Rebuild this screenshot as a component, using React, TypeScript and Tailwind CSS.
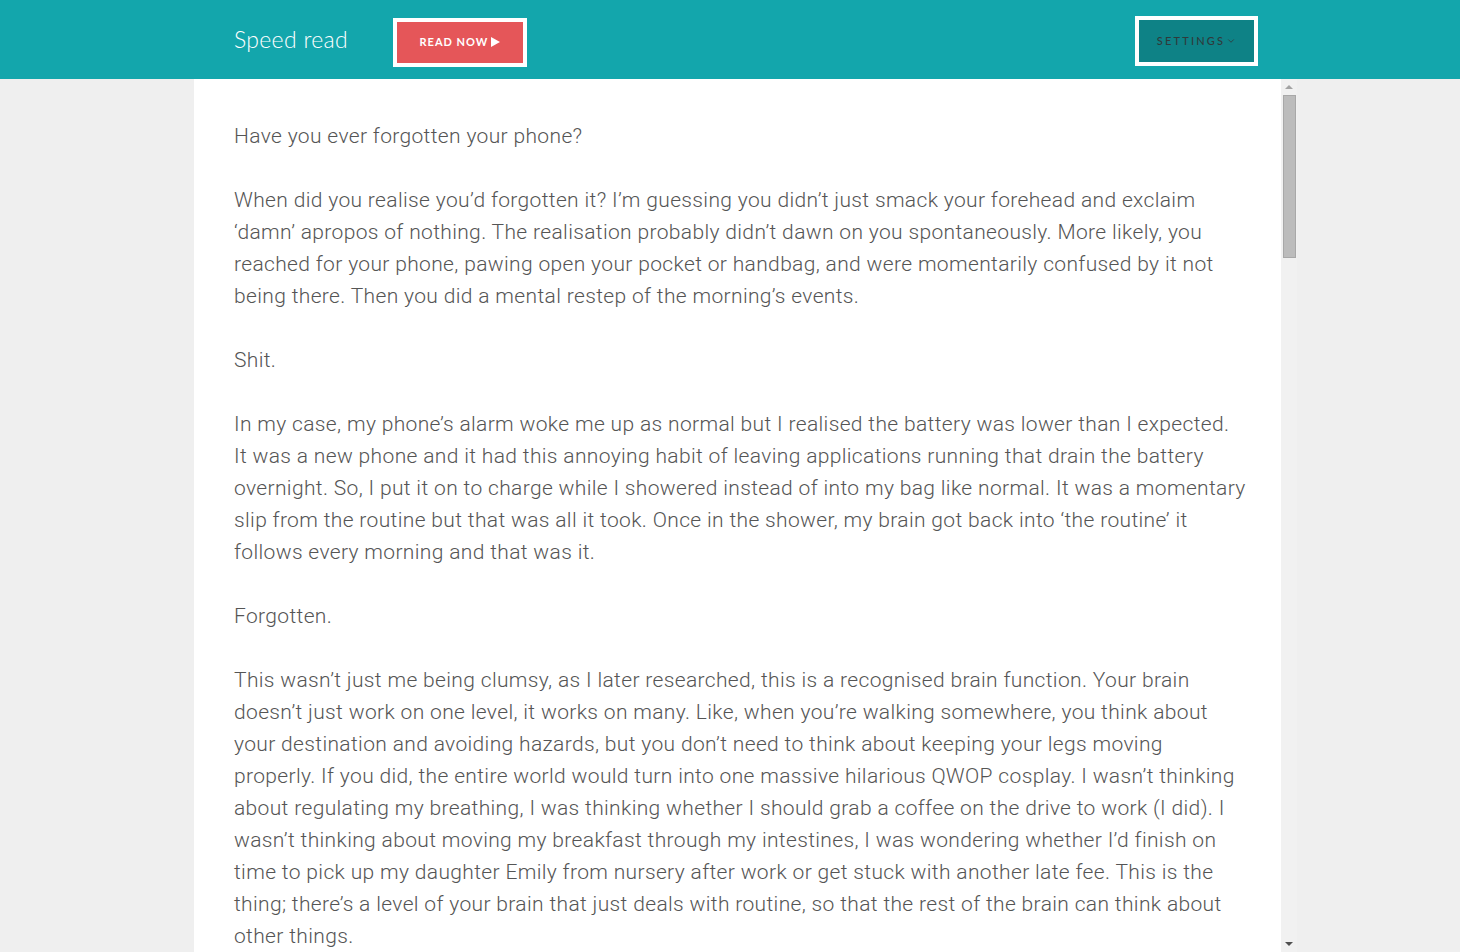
import { ChevronDown } from "lucide-react";

const paragraphs: string[][] = [
  ["Have you ever forgotten your phone?"],
  [
    "When did you realise you\u2019d forgotten it? I\u2019m guessing you didn\u2019t just smack your forehead and exclaim",
    "\u2018damn\u2019 apropos of nothing. The realisation probably didn\u2019t dawn on you spontaneously. More likely, you",
    "reached for your phone, pawing open your pocket or handbag, and were momentarily confused by it not",
    "being there. Then you did a mental restep of the morning\u2019s events.",
  ],
  ["Shit."],
  [
    "In my case, my phone\u2019s alarm woke me up as normal but I realised the battery was lower than I expected.",
    "It was a new phone and it had this annoying habit of leaving applications running that drain the battery",
    "overnight. So, I put it on to charge while I showered instead of into my bag like normal. It was a momentary",
    "slip from the routine but that was all it took. Once in the shower, my brain got back into \u2018the routine\u2019 it",
    "follows every morning and that was it.",
  ],
  ["Forgotten."],
  [
    "This wasn\u2019t just me being clumsy, as I later researched, this is a recognised brain function. Your brain",
    "doesn\u2019t just work on one level, it works on many. Like, when you\u2019re walking somewhere, you think about",
    "your destination and avoiding hazards, but you don\u2019t need to think about keeping your legs moving",
    "properly. If you did, the entire world would turn into one massive hilarious QWOP cosplay. I wasn\u2019t thinking",
    "about regulating my breathing, I was thinking whether I should grab a coffee on the drive to work (I did). I",
    "wasn\u2019t thinking about moving my breakfast through my intestines, I was wondering whether I\u2019d finish on",
    "time to pick up my daughter Emily from nursery after work or get stuck with another late fee. This is the",
    "thing; there\u2019s a level of your brain that just deals with routine, so that the rest of the brain can think about",
    "other things.",
  ],
];

function Header() {
  return (
    <header className="h-[79px] bg-[#13a6ac] flex items-center">
      <div className="w-[1024px] ml-[234px] flex items-center">
        <h1 className="text-[23px] font-light text-white font-['Lato',sans-serif] tracking-[0.3px]">Speed read</h1>
        <button className="ml-[45px] mt-[6px] h-[49px] w-[134px] border-[4px] border-white bg-[#e55659] text-white text-[11px] font-bold tracking-[1px] font-['Lato',sans-serif] flex items-center justify-center gap-[3px]">
          READ NOW
          <svg width="9" height="10" viewBox="0 0 9 10" className="mb-[1px]">
            <path d="M0 0 L9 5 L0 10 Z" fill="white" />
          </svg>
        </button>
        <button className="ml-auto mt-[3px] h-[50px] w-[123px] border-[4px] border-white bg-[#0e8286] text-[#2f3a3b] text-[11px] font-medium tracking-[2.2px] font-['Lato',sans-serif] flex items-center justify-center gap-[1px]">
          SETTINGS
          <ChevronDown size={10} strokeWidth={2} />
        </button>
      </div>
    </header>
  );
}

function Scrollbar() {
  return (
    <div className="w-[16px] h-[873px] bg-[#f1f1f1] flex flex-col items-center">
      <div className="h-[16px] flex items-center justify-center">
        <div className="w-0 h-0 border-l-[4px] border-r-[4px] border-b-[4px] border-l-transparent border-r-transparent border-b-[#a3a3a3]" />
      </div>
      <div className="w-[13px] h-[163px] bg-[#bcbcbc] border border-[#a8a8a8]" />
      <div className="flex-1" />
      <div className="h-[16px] flex items-center justify-center">
        <div className="w-0 h-0 border-l-[4px] border-r-[4px] border-t-[4px] border-l-transparent border-r-transparent border-t-[#505050]" />
      </div>
    </div>
  );
}

export default function App() {
  return (
    <div className="min-h-[952px] h-[952px] overflow-hidden bg-[#efefef]">
      <Header />
      <div className="flex ml-[194px]">
        <main className="w-[1087px] h-[873px] bg-white px-[40px] pt-[41px] overflow-hidden">
          {paragraphs.map((lines, i) => (
            <p
              key={i}
              className="mb-[32px] text-[21px] leading-[32px] font-light tracking-[0.35px] text-[#555555] font-['Roboto',sans-serif] whitespace-nowrap"
            >
              {lines.map((l, j) => (
                <span key={j} className="block">
                  {l}
                </span>
              ))}
            </p>
          ))}
        </main>
        <Scrollbar />
      </div>
    </div>
  );
}
